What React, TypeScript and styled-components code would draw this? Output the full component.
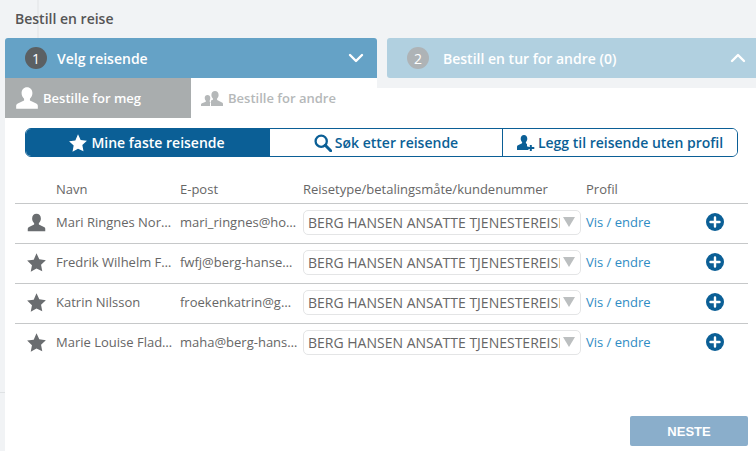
import styled, {createGlobalStyle} from 'styled-components';
import {ChevronDown, ChevronUp} from 'lucide-react';

const GlobalStyle = createGlobalStyle`
	html, body {
		margin: 0;
		padding: 0;
		background: #fff;
	}
	* {
		box-sizing: border-box;
	}
`;

type Traveller = {
	name: string;
	email: string;
	kind: 'person' | 'star';
};

const travellers: Traveller[] = [
	{name: 'Mari Ringnes Nordheim', email: 'mari_ringnes@hotmail.com', kind: 'person'},
	{name: 'Fredrik Wilhelm Fjeldstad', email: 'fwfj@berg-hansen.no', kind: 'star'},
	{name: 'Katrin Nilsson', email: 'froekenkatrin@gmail.com', kind: 'star'},
	{name: 'Marie Louise Fladmark', email: 'maha@berg-hansen.no', kind: 'star'},
];

const PERSON = 'M12 2c-3 0-5 2.300-5 5.400 0 2.200.9 4 2.300 5.200v1.700L3.500 17c-1 .5-1.500 1.200-1.500 2.200V22h20v-2.800c0-1-.5-1.700-1.500-2.200l-5.800-2.700v-1.700c1.400-1.200 2.300-3 2.300-5.200C17 4.300 15 2 12 2z';
const STAR = 'M12 1.500l3.200 6.900 7.500.9-5.500 5.200 1.400 7.500L12 18.800l-6.600 3.700 1.400-7.500-5.500-5.200 7.500-.9z';

function PersonIcon({size, color}: {size: number; color: string}) {
	return (
		<svg width={size} height={size} viewBox="0 0 24 24" fill={color}>
			<path d={PERSON} />
		</svg>
	);
}

function StarIcon({size, color}: {size: number; color: string}) {
	return (
		<svg width={size} height={size} viewBox="0 0 24 24" fill={color}>
			<path d={STAR} />
		</svg>
	);
}

function GroupIcon() {
	return (
		<svg width="22" height="15" viewBox="0 0 22 15" fill="#b5b8b9">
			<path d="M6.500 4c-1.700 0-2.800 1.300-2.800 3 0 1.100.4 2 1.100 2.700v1L1 12.300c-.6.300-1 .7-1 1.300V15h9v-3.200l.8-.5-1.100-.6v-1C8.900 9 9.300 8.100 9.300 7c0-1.700-1.100-3-2.800-3z" />
			<path d="M14 0c-2.100 0-3.600 1.700-3.600 3.900 0 1.500.6 2.700 1.500 3.500v1.300l-1.900.9v.1L10 15h12v-2.100c0-.7-.4-1.200-1-1.500l-4.900-2.500V7.400c.9-.8 1.500-2 1.500-3.500C17.600 1.700 16.100 0 14 0z" />
		</svg>
	);
}

function SearchIcon() {
	return (
		<svg width="18" height="18" viewBox="0 0 18 18" fill="none" stroke="#0b5f96" strokeWidth="2.300">
			<circle cx="7.200" cy="7.200" r="5.600" />
			<path d="M11.300 11.300l5.400 5.400" strokeLinecap="round" strokeWidth="3" />
		</svg>
	);
}

function AddPersonIcon() {
	return (
		<svg width="18" height="16" viewBox="0 0 18 16" fill="#0b5f96">
			<path d="M7 0C5 0 3.700 1.600 3.700 3.700c0 1.400.6 2.500 1.400 3.300v1.300L1 10.300c-.7.300-1 .8-1 1.500V15h11.500v-3.500H10V8.900l-1.100-.6V7c.8-.8 1.400-1.900 1.400-3.300C10.300 1.600 9 0 7 0z" />
			<path d="M12.800 10h2v2h2.500v2h-2.500v2h-2v-2h-2v-2h2z" />
		</svg>
	);
}

function PlusCircle() {
	return (
		<svg width="18" height="18" viewBox="0 0 18 18">
			<circle cx="9" cy="9" r="9" fill="#0b5f96" />
			<path d="M9 4.500v9M4.500 9h9" stroke="#fff" strokeWidth="2.400" strokeLinecap="round" />
		</svg>
	);
}

function App() {
	return (
		<>
			<GlobalStyle />
			<Page>
				<Title>Bestill en reise</Title>
				<Steps>
					<Step $active>
						<StepNumber $active>1</StepNumber>
						<StepLabel $active>Velg reisende</StepLabel>
						<ChevronDown size={24} color="#fff" strokeWidth={2.400} />
					</Step>
					<Step>
						<StepNumber>2</StepNumber>
						<StepLabel>Bestill en tur for andre (0)</StepLabel>
						<ChevronUp size={24} color="#fff" strokeWidth={2.400} />
					</Step>
				</Steps>
				<Panel>
					<Tabs>
						<Tab $active>
							<PersonIcon size={26} color="#fff" />
							Bestille for meg
						</Tab>
						<Tab>
							<GroupIcon />
							Bestille for andre
						</Tab>
						<TabFill />
					</Tabs>
					<Segments>
						<Segment $active $width={243}>
							<StarIcon size={20} color="#fff" />
							Mine faste reisende
						</Segment>
						<Segment $width={233}>
							<SearchIcon />
							Søk etter reisende
						</Segment>
						<Segment $width={235}>
							<AddPersonIcon />
							Legg til reisende uten profil
						</Segment>
					</Segments>
					<Table>
						<HeadRow>
							<span />
							<HeadCell>Navn</HeadCell>
							<HeadCell>E-post</HeadCell>
							<HeadCell>Reisetype/betalingsmåte/kundenummer</HeadCell>
							<HeadCell>Profil</HeadCell>
						</HeadRow>
						{travellers.map(traveller => (
							<Row key={traveller.email}>
								<RowIcon>
									{traveller.kind === 'person' ? (
										<PersonIcon size={21} color="#6a6d70" />
									) : (
										<StarIcon size={21} color="#6a6d70" />
									)}
								</RowIcon>
								<Cell $gutter={7}>{traveller.name}</Cell>
								<Cell $gutter={4}>{traveller.email}</Cell>
								<Select>
									<SelectText>BERG HANSEN ANSATTE TJENESTEREISE</SelectText>
									<Arrow />
								</Select>
								<ProfileLink>Vis / endre</ProfileLink>
								<PlusCell>
									<PlusCircle />
								</PlusCell>
							</Row>
						))}
					</Table>
					<Footer>
						<NextButton>NESTE</NextButton>
					</Footer>
				</Panel>
			</Page>
		</>
	);
}

export default App;

const Page = styled.div`
	width: 756px;
	height: 451px;
	overflow: hidden;
	padding-left: 5px;
	background:
		linear-gradient(#dfe2e4, #dfe2e4) 0 392px / 5px 1px no-repeat,
		linear-gradient(#e9ebed, #e9ebed) 37px 0 / 2px 38px no-repeat,
		#f1f3f5;
	font-family: 'Open Sans', 'Liberation Sans', sans-serif;
	display: flex;
	flex-direction: column;
`;

const Title = styled.div`
	height: 38px;
	padding: 11px 0 0 10px;
	font-size: 14px;
	line-height: 16px;
	font-weight: 600;
	color: #555;
`;

const Steps = styled.div`
	display: flex;
	gap: 10px;
	height: 40px;
`;

const Step = styled.div<{$active?: boolean}>`
	flex: ${props => (props.$active ? '0 0 372px' : '1')};
	display: flex;
	align-items: center;
	padding: 0 ${props => (props.$active ? '9px' : '6px')} 0 20px;
	border-radius: ${props => (props.$active ? '3px 3px 0 0' : '3px 0 0 3px')};
	background: ${props => (props.$active ? '#65a2c6' : '#b1d0e0')};
	color: #fff;
`;

const StepNumber = styled.div<{$active?: boolean}>`
	width: 22px;
	height: 22px;
	border-radius: 50%;
	display: flex;
	align-items: center;
	justify-content: center;
	font-size: 14px;
	background: ${props => (props.$active ? '#5b6063' : '#aeb3b6')};
`;

const StepLabel = styled.div<{$active?: boolean}>`
	flex: 1;
	margin-left: ${props => (props.$active ? '10px' : '14px')};
	font-size: 14px;
	font-weight: 600;
`;

const Panel = styled.div`
	flex: 1;
	display: flex;
	flex-direction: column;
	background: #fff;
`;

const Tabs = styled.div`
	display: flex;
	height: 40px;
`;

const Tab = styled.div<{$active?: boolean}>`
	flex: 0 0 186px;
	display: flex;
	align-items: center;
	gap: ${props => (props.$active ? '3px' : '5px')};
	padding-left: ${props => (props.$active ? '9px' : '10px')};
	background: ${props => (props.$active ? '#a9adae' : '#fff')};
	color: ${props => (props.$active ? '#fff' : '#b5b8b9')};
	font-size: 13px;
	font-weight: 600;
`;

const TabFill = styled.div`
	flex: 1;
	height: 10px;
	background: #f1f3f5;
`;

const Segments = styled.div`
	display: flex;
	margin: 10px 18px 0 20px;
	height: 29px;
	border: 1px solid #0b5f96;
	border-radius: 6px;
	overflow: hidden;
`;

const Segment = styled.div<{$active?: boolean; $width: number}>`
	flex: 0 0 ${props => props.$width}px;
	display: flex;
	align-items: center;
	justify-content: center;
	gap: 3px;
	padding-right: ${props => (props.$active ? '2px' : '0')};
	background: ${props => (props.$active ? '#0b5f96' : '#fff')};
	color: ${props => (props.$active ? '#fff' : '#0b5f96')};
	font-size: 14px;
	font-weight: 600;

	& + & {
		border-left: 1px solid #0b5f96;
	}
`;

const Table = styled.div`
	margin: 15px 8px 0 10px;
	font-size: 13px;
	color: #666;
`;

const COLUMNS = '41px 124px 123px 283px 110px 1fr';

const HeadRow = styled.div`
	display: grid;
	grid-template-columns: ${COLUMNS};
	align-items: center;
	height: 31px;
	padding-top: 2px;
`;

const HeadCell = styled.div`
	white-space: nowrap;
`;

const Row = styled.div`
	display: grid;
	grid-template-columns: ${COLUMNS};
	align-items: center;
	height: 40px;
	padding-bottom: 3px;
	border-top: 1px solid #c6c8c9;
`;

const RowIcon = styled.div`
	display: flex;
	padding-left: 11px;
`;

const Cell = styled.div<{$gutter: number}>`
	overflow: hidden;
	padding-right: ${props => props.$gutter}px;
	white-space: nowrap;
	text-overflow: ellipsis;
`;

const Select = styled.div`
	width: 278px;
	height: 25px;
	display: flex;
	align-items: center;
	padding: 0 5px 0 4px;
	border: 1px solid #e4e5e6;
	border-radius: 5px;
	font-size: 14px;
`;

const SelectText = styled.div`
	flex: 1;
	overflow: hidden;
	white-space: nowrap;
`;

const Arrow = styled.div`
	margin-left: 3px;
	border-left: 6px solid transparent;
	border-right: 6px solid transparent;
	border-top: 10px solid #bcbfc0;
`;

const ProfileLink = styled.a`
	color: #2f8cc4;
`;

const PlusCell = styled.div`
	display: flex;
	padding-left: 10px;
`;

const Footer = styled.div`
	flex: 1;
	display: flex;
	justify-content: flex-end;
	align-items: flex-end;
	padding: 0 8px 5px 0;
`;

const NextButton = styled.div`
	width: 118px;
	height: 30px;
	display: flex;
	align-items: center;
	justify-content: center;
	border-radius: 2px;
	background: #8aaecb;
	color: #fff;
	font-family: 'Liberation Sans', sans-serif;
	font-size: 13px;
	font-weight: 700;
`;
